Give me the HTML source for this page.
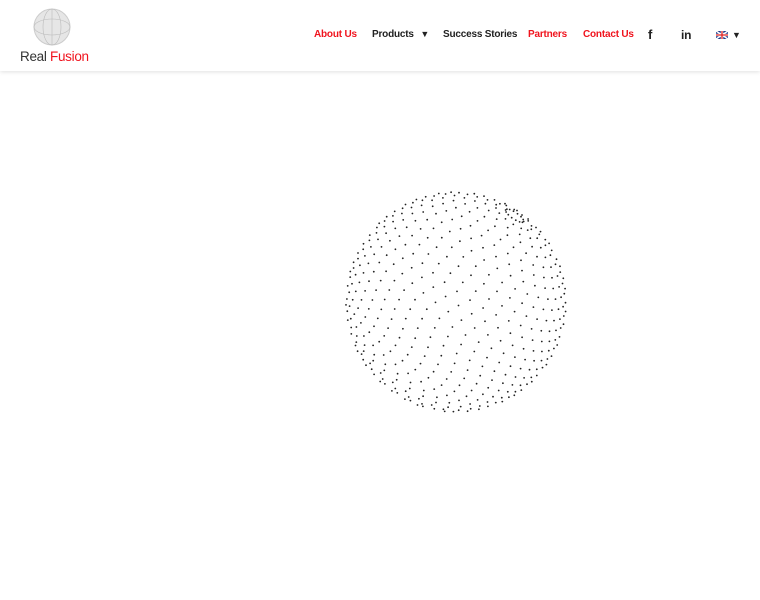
<!DOCTYPE html>
<html><head><meta charset="utf-8"><style>
body{margin:0;width:760px;height:600px;background:#fff;font-family:"Liberation Sans",sans-serif;overflow:hidden;position:relative}
.hdr{position:absolute;left:0;top:0;width:760px;height:71px;background:#fff;box-shadow:0 1px 4px rgba(0,0,0,.12)}
.nav{position:absolute;top:29px;font-size:10px;font-weight:bold;white-space:nowrap;letter-spacing:-0.2px}
.r{color:#f0141e}.k{color:#222}
</style></head><body>
<div class="hdr">
<svg style="position:absolute;left:33px;top:8px" width="40" height="40"><circle cx="19" cy="19" r="18" fill="#e6e6e6" stroke="#ccc"/><g fill="none" stroke="#bbb" stroke-width=".6"><ellipse cx="19" cy="19" rx="9" ry="18"/><ellipse cx="19" cy="19" rx="18" ry="8"/><line x1="19" y1="1" x2="19" y2="37"/></g></svg>
<div style="position:absolute;left:20px;top:49px;font-size:13.5px;color:#333;letter-spacing:-0.3px">Real <span class="r">Fusion</span></div>
<div class="nav r" style="left:314px">About Us</div>
<div class="nav k" style="left:372px">Products <span style="font-size:9px;margin-left:4px">&#9660;</span></div>
<div class="nav k" style="left:443px">Success Stories</div>
<div class="nav r" style="left:528px">Partners</div>
<div class="nav r" style="left:583px">Contact Us</div>
<div class="nav k" style="left:648px;font-size:13px;top:27px">f</div>
<div class="nav k" style="left:681px;font-size:12px;top:28px">in</div>
<svg style="position:absolute;left:716px;top:31px" width="12" height="8"><rect width="12" height="8" fill="#1d3a8a"/><path d="M0 0L12 8M12 0L0 8" stroke="#fff" stroke-width="1.5"/><path d="M6 0V8M0 4H12" stroke="#fff" stroke-width="2.5"/><path d="M6 0V8M0 4H12" stroke="#d22" stroke-width="1.3"/></svg>
<div class="nav k" style="left:732px;font-size:9px;top:30px">&#9660;</div>
</div>
<svg id="s" style="position:absolute;left:0;top:0" width="760" height="600"></svg>
<script>
var cx=456,cy=302,R=110;
var p=[0.53,-0.78,0.3];var n=Math.hypot(p[0],p[1],p[2]);p=p.map(v=>v/n);
var u=[0,-p[2],p[1]];n=Math.hypot(u[0],u[1],u[2]);u=u.map(v=>v/n);
var w=[p[1]*u[2]-p[2]*u[1],p[2]*u[0]-p[0]*u[2],p[0]*u[1]-p[1]*u[0]];
var s='';
for(var i=1;i<32;i++){var lat=-Math.PI/2+i*Math.PI/32;var c=Math.cos(lat),sn=Math.sin(lat);var m=Math.max(14,Math.round(44*c));
for(var j=0;j<m;j++){var lo=j*2*Math.PI/m+i*0.3;var x=[0,1,2].map(k=>p[k]*sn+c*(Math.cos(lo)*u[k]+Math.sin(lo)*w[k]));
if(x[2]>=0){s+='<circle cx="'+(cx+R*x[0]).toFixed(1)+'" cy="'+(cy+R*x[1]).toFixed(1)+'" r="0.9" fill="#222"/>';}}}
document.getElementById('s').innerHTML=s;
</script>
</body></html>
